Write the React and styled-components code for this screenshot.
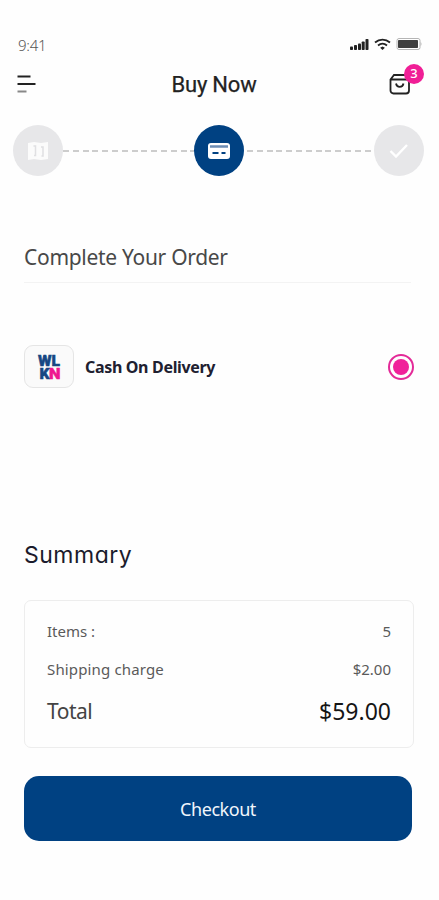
import React from "react";
import styled, { createGlobalStyle } from "styled-components";

const GlobalStyle = createGlobalStyle`
  * {
    box-sizing: border-box;
  }
  body {
    margin: 0;
    background: #fefefe;
    font-family: "Noto Sans", "Open Sans", sans-serif;
  }
`;

const Screen = styled.main`
  width: 439px;
  height: 900px;
  padding-top: 34px;
  display: flex;
  flex-direction: column;
  overflow: hidden;
`;

const StatusBar = styled.div`
  height: 22px;
  padding: 0 17px 0 18px;
  display: flex;
  align-items: center;
  justify-content: space-between;
`;

const Time = styled.span`
  color: #555;
  font-size: 15px;
  font-weight: 300;
  letter-spacing: -0.3px;
`;

const StatusIcons = styled.svg`
  width: 74px;
  height: 16px;
  margin-top: -3px;
`;

const Header = styled.header`
  height: 56px;
  padding: 0 12px 0 17px;
  display: grid;
  grid-template-columns: 40px 1fr 40px;
  align-items: center;
`;

const IconButton = styled.button`
  position: relative;
  height: 40px;
  padding: 0 0 0 ${(props) => props.$indent || "0"};
  border: none;
  background: transparent;
  display: flex;
  align-items: center;
  cursor: pointer;
`;

const Title = styled.h1`
  margin: 0;
  padding-right: 16px;
  color: #222;
  font-family: Roboto, sans-serif;
  font-size: 22px;
  font-weight: 400;
  -webkit-text-stroke: 0.25px #222;
  text-align: center;
  letter-spacing: -0.2px;
`;

const Badge = styled.span`
  position: absolute;
  top: 0;
  right: 3px;
  width: 20px;
  height: 20px;
  border-radius: 50%;
  background: #f01e96;
  color: #fff;
  font-family: "Noto Sans", sans-serif;
  font-size: 13px;
  font-weight: 500;
  line-height: 19px;
  text-align: center;
`;

const Stepper = styled.div`
  padding: 13px 15px 0 13px;
  display: grid;
  grid-template-columns: 50px 1fr 50px 1fr 50px;
  align-items: center;
`;

const Step = styled.div`
  height: 51px;
  border-radius: 50%;
  background: ${(props) => (props.$active ? "#004182" : "#e7e7e9")};
  display: flex;
  align-items: center;
  justify-content: center;
`;

const StepLine = styled.div`
  height: 2px;
  margin: 0 ${(props) => props.$gap || "0"};
  background: repeating-linear-gradient(90deg, #cdcdcd 0 6px, transparent 6px 9.8px);
`;

const SectionTitle = styled.h2`
  height: 50px;
  margin: 57px 28px 0 24px;
  border-bottom: 1px solid #f3f3f3;
  color: #484848;
  font-size: 21px;
  font-weight: 400;
  line-height: 49px;
  letter-spacing: -0.3px;
`;

const PaymentMethod = styled.label`
  margin: 62px 25px 0 24px;
  height: 43px;
  display: flex;
  align-items: center;
  cursor: pointer;
`;

const LogoBox = styled.div`
  width: 50px;
  height: 43px;
  margin-right: 11px;
  border: 1px solid #e5e5e5;
  border-radius: 9px;
  background: #fafafa;
  display: flex;
  align-items: center;
  justify-content: center;
`;

const PaymentName = styled.span`
  flex: 1;
  color: #202030;
  font-size: 16px;
  font-weight: 700;
  letter-spacing: -0.33px;
`;

const Radio = styled.span`
  width: 26px;
  height: 26px;
  border: 2px solid #e32a98;
  border-radius: 50%;
  display: flex;
  align-items: center;
  justify-content: center;

  &::after {
    content: "";
    width: 16px;
    height: 16px;
    border-radius: 50%;
    background: #f0219a;
  }
`;

const SummaryTitle = styled.h2`
  margin: 149px 0 0 24px;
  height: 36px;
  color: #1b1b2c;
  font-family: Inter, sans-serif;
  font-size: 23px;
  font-weight: 400;
  font-feature-settings: "cv11";
  letter-spacing: 0.5px;
  line-height: 36px;
`;

const SummaryCard = styled.section`
  height: 148px;
  margin: 27px 25px 0 24px;
  padding: 11px 22px 0;
  border: 1px solid #ededed;
  border-radius: 7px;
`;

const SummaryRow = styled.div`
  height: 38px;
  display: flex;
  align-items: center;
  justify-content: space-between;
  color: #5a5a5a;
  font-size: 15px;
`;

const TotalRow = styled(SummaryRow)`
  height: 46px;
  color: #444;
  font-size: 21px;
`;

const TotalLabel = styled.span`
  letter-spacing: -0.5px;
`;

const ShippingLabel = styled.span`
  letter-spacing: 0.15px;
`;

const TotalPrice = styled.span`
  color: #151515;
  font-size: 23px;
`;

const CheckoutButton = styled.button`
  height: 65px;
  margin: 28px 27px 0 24px;
  border: none;
  border-radius: 15px;
  background: #004182;
  color: #f1f6fc;
  font-family: "Noto Sans", sans-serif;
  font-size: 18px;
  letter-spacing: -0.45px;
  cursor: pointer;
`;

const Logo = styled.svg`
  width: 42px;
  height: 38px;
  font-family: Roboto, sans-serif;
  font-size: 15px;
  font-weight: 900;
`;

function SignalIcons() {
  return (
    <StatusIcons viewBox="0 0 74 16">
      <g fill="#222">
        <rect x="2" y="10.5" width="3" height="3.5" rx="0.8" />
        <rect x="6" y="9" width="3" height="5" rx="0.8" />
        <rect x="10" y="7.5" width="3" height="6.5" rx="0.8" />
        <rect x="13.7" y="5.5" width="3" height="8.5" rx="0.8" />
        <rect x="17.5" y="3" width="3" height="11" rx="0.8" />
        <path d="M34.5 10.5l2.4 1.2-2.4 2.3-2.4-2.3z" />
      </g>
      <g fill="none" stroke="#222" strokeWidth="1.8">
        <path d="M27 6.5c4.5-3.8 10.5-3.8 15 0" />
        <path d="M30 9.5c2.7-2.2 6.3-2.2 9 0" />
      </g>
      <rect x="49" y="2.5" width="23" height="11" rx="2" fill="#fff" stroke="#b5b5b5" />
      <rect x="50" y="4" width="20" height="8" rx="0.8" fill="#3f3f3f" />
      <path d="M72.5 6v4c1.4-.7 1.4-3.3 0-4z" fill="#bbb" />
    </StatusIcons>
  );
}

function MenuIcon() {
  return (
    <svg width="20" height="20" viewBox="0 0 20 20" strokeWidth="2">
      <path d="M0.5 2.5h13M0.5 10h18" stroke="#222" />
      <path d="M0.5 17.5h9" stroke="#888" />
    </svg>
  );
}

function BagIcon() {
  return (
    <svg width="22" height="22" viewBox="0 0 22 22" fill="none" stroke="#222" strokeWidth="1.8">
      <path d="M1.5 6.5L5 2h12l3 4.500v11a3 3 0 0 1-3 3H4.5a3 3 0 0 1-3-3zM1.5 6.5H20M7 10.5c.8 4.4 6.700 4.4 7.5 0" />
    </svg>
  );
}

function MapIcon() {
  return (
    <svg width="22" height="20" viewBox="0 0 22 20">
      <path d="M1 2l6-1 7 1 7-1v17l-7 1-7-1-6 1z" fill="#fbfbfb" />
      <path d="M6.5 5h2v9.5H7M14 6h2v9h-1.5" fill="none" stroke="#e0e0e2" strokeWidth="1.5" />
    </svg>
  );
}

function CardIcon() {
  return (
    <svg width="22" height="18" viewBox="0 0 22 18">
      <rect x="0" y="1" width="22" height="16" rx="3" fill="#fff" />
      <path d="M2 4.5h18" stroke="#6c8db4" strokeWidth="2.5" />
      <path d="M4.5 11h6M13.5 11h4" stroke="#004182" strokeWidth="2" />
    </svg>
  );
}

function CheckIcon() {
  return (
    <svg width="20" height="16" viewBox="0 0 20 16">
      <path d="M1.5 8l5.5 5.5L18 2" fill="none" stroke="#fff" strokeWidth="2.4" />
    </svg>
  );
}

function BrandLogo() {
  return (
    <Logo viewBox="0 0 42 38">
      <g fill="#174783" stroke="#174783" strokeWidth="0.5">
        <text x="10" y="18" textLength="22" lengthAdjust="spacingAndGlyphs">WL</text>
        <text x="11.5" y="30.5" textLength="10" lengthAdjust="spacingAndGlyphs">K</text>
      </g>
      <text x="21" y="30.5" textLength="11.5" lengthAdjust="spacingAndGlyphs" fill="#ef168f" stroke="#ef168f" strokeWidth="0.5">N</text>
    </Logo>
  );
}

export default function App() {
  return (
    <Screen>
      <GlobalStyle />
      <StatusBar>
        <Time>9:41</Time>
        <SignalIcons />
      </StatusBar>
      <Header>
        <IconButton aria-label="Menu">
          <MenuIcon />
        </IconButton>
        <Title>Buy Now</Title>
        <IconButton aria-label="Cart" $indent="2px">
          <BagIcon />
          <Badge>3</Badge>
        </IconButton>
      </Header>
      <Stepper>
        <Step>
          <MapIcon />
        </Step>
        <StepLine />
        <Step $active>
          <CardIcon />
        </Step>
        <StepLine $gap="3px" />
        <Step>
          <CheckIcon />
        </Step>
      </Stepper>
      <SectionTitle>Complete Your Order</SectionTitle>
      <PaymentMethod>
        <LogoBox>
          <BrandLogo />
        </LogoBox>
        <PaymentName>Cash On Delivery</PaymentName>
        <Radio />
      </PaymentMethod>
      <SummaryTitle>Summary</SummaryTitle>
      <SummaryCard>
        <SummaryRow>
          <span>Items :</span>
          <span>5</span>
        </SummaryRow>
        <SummaryRow>
          <ShippingLabel>Shipping charge</ShippingLabel>
          <span>$2.00</span>
        </SummaryRow>
        <TotalRow>
          <TotalLabel>Total</TotalLabel>
          <TotalPrice>$59.00</TotalPrice>
        </TotalRow>
      </SummaryCard>
      <CheckoutButton>Checkout</CheckoutButton>
    </Screen>
  );
}
